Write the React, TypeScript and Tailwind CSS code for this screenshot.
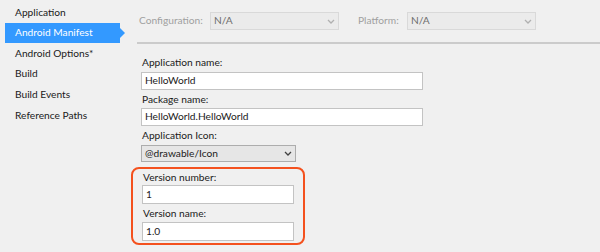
import React from "react";

const font = { fontFamily: 'Lato, "Noto Sans", sans-serif' };

function Chevron({ color = "#555" }: { color?: string }) {
  return (
    <svg width="8" height="5" viewBox="0 0 8 5" className="shrink-0">
      <path d="M1 1 L4 4 L7 1" fill="none" stroke={color} strokeWidth="1.3" />
    </svg>
  );
}

export default function App() {
  const items = ["Application", "Android Manifest", "Android Options*", "Build", "Build Events", "Reference Paths"];
  return (
    <div
      className="w-[600px] h-[252px] bg-[#f0f0f0] flex overflow-hidden text-[10.2px] text-[#1a1a1a]"
      style={font}
    >
      {/* Sidebar */}
      <div className="w-[137px] shrink-0 pt-[2px] flex flex-col">
        {items.map((it) =>
          it === "Android Manifest" ? (
            <div key={it} className="relative ml-[5px] w-[115px] h-[20.6px] bg-[#3399ff] text-white flex items-center pl-[10px]">
              {it}
              <div className="absolute right-[-5px] top-1/2 -translate-y-1/2 w-0 h-0 border-l-[5px] border-l-[#3399ff] border-y-[5px] border-y-transparent" />
            </div>
          ) : (
            <div key={it} className="h-[20.6px] flex items-center pl-[15px]">
              {it}
            </div>
          )
        )}
      </div>

      {/* Main */}
      <div className="flex-1 flex flex-col">
        <div className="h-[42px] flex items-center text-[#a0a0a0]">
          <span className="ml-[2px] w-[71px]">Configuration:</span>
          <div className="w-[129px] h-[18px] border border-[#d9d9d9] bg-[#ebebeb] flex items-center justify-between px-[3px] text-[#6d6d6d]">
            <span>N/A</span>
            <Chevron color="#b0b0b0" />
          </div>
          <span className="ml-[19px] w-[49px]">Platform:</span>
          <div className="w-[129px] h-[18px] border border-[#d9d9d9] bg-[#ebebeb] flex items-center justify-between px-[3px] text-[#6d6d6d]">
            <span>N/A</span>
            <Chevron color="#b0b0b0" />
          </div>
        </div>
        <div className="h-[2px] bg-[#cbcbcb]" />

        <div className="pl-[4px] pt-[10px] flex flex-col">
          <div className="h-[16px] leading-[16px] pl-[1px]">Application name:</div>
          <div className="mt-[2px] w-[282px] h-[18px] border border-[#c3c3c3] bg-white flex items-center px-[3px]">HelloWorld</div>
          <div className="h-[18px] leading-[18px] pl-[1px]">Package name:</div>
          <div className="w-[282px] h-[18px] border border-[#c3c3c3] bg-white flex items-center px-[3px]">HelloWorld.HelloWorld</div>
          <div className="h-[19px] leading-[19px] pl-[1px]">Application Icon:</div>
          <div className="w-[155px] h-[17px] border border-[#adadad] bg-[#e6e6e6] flex items-center justify-between pl-[3px] pr-[3px]">
            <span>@drawable/Icon</span>
            <Chevron color="#404040" />
          </div>

          <div className="mt-[5px] -ml-[10px] w-[174px] h-[78px] border-2 border-[#f4511e] rounded-[8px] pl-[9px] flex flex-col">
            <div className="h-[16px] leading-[16px] pl-[1px]">Version number:</div>
            <div className="w-[152px] h-[19px] border border-[#c3c3c3] bg-white flex items-center px-[3px]">1</div>
            <div className="h-[18px] leading-[18px] pl-[1px]">Version name:</div>
            <div className="w-[152px] h-[19px] border border-[#c3c3c3] bg-white flex items-center px-[3px]">1.0</div>
          </div>
        </div>
      </div>
    </div>
  );
}
